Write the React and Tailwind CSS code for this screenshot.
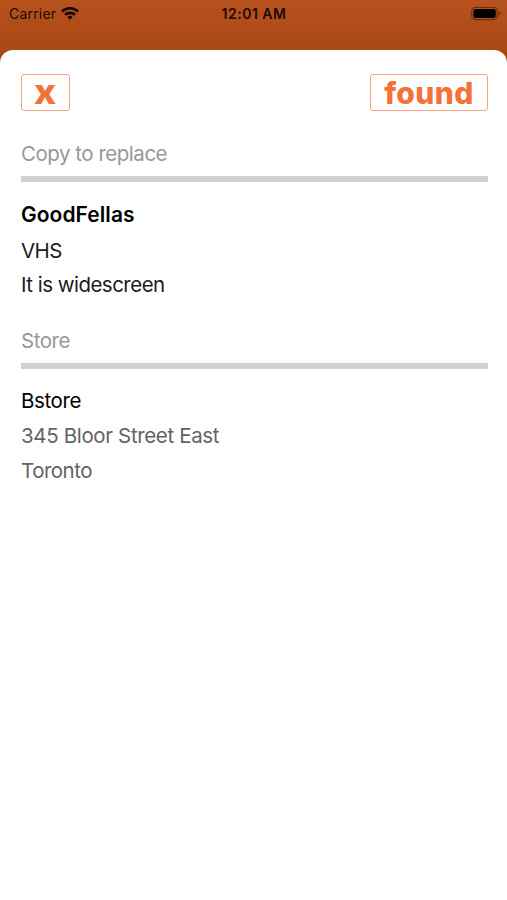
const WifiIcon = () => (
  <svg viewBox="0 0 18 13" className="ml-[5px] h-[13px] w-[18px]" fill="none" stroke="#120602" strokeWidth="2.6">
    <path d="M1 4.6a11.4 11.4 0 0 1 16 0" />
    <path d="M4 7.9a7.1 7.1 0 0 1 10 0" />
    <path d="M9 12.8 6.3 10.1a3.9 3.9 0 0 1 5.4 0z" fill="#120602" stroke="none" />
  </svg>
);

const BatteryIcon = () => (
  <svg viewBox="0 0 30 14" className="h-[14px] w-[30px]">
    <rect x="0.8" y="0.4" width="25.4" height="12.2" rx="3.6" fill="none" stroke="#6d2e10" strokeWidth="1.2" />
    <rect x="2.5" y="2" width="22.2" height="9.1" rx="2" fill="#000" />
    <path d="M27.7 4.4c2 .7 2 3.5 0 4.2z" fill="#6d2e10" />
  </svg>
);

const StatusBar = () => (
  <div className="grid h-[27px] grid-cols-3 items-center pr-[6px] pl-[9px] text-[14px] text-[#1d0b04]">
    <div className="flex items-center">
      <span className="tracking-[0.2px]">Carrier</span>
      <WifiIcon />
    </div>
    <span className="-ml-[2px] text-center font-semibold tracking-[0.5px] whitespace-nowrap">12:01 AM</span>
    <div className="flex justify-end">
      <BatteryIcon />
    </div>
  </div>
);

const OutlineButton = ({ className, children }) => (
  <button
    className={`flex h-[37px] items-center justify-center rounded-[3px] border border-[#f5a583] font-extrabold text-[#f27238] ${className}`}
  >
    {children}
  </button>
);

const Section = ({ title, className, children }) => (
  <section className={className}>
    <h2 className="h-[35px] text-[20.5px] leading-[26px] tracking-[-0.48px] text-[#98989a]">{title}</h2>
    <div className="h-[6px] bg-[#d1d1d5]" />
    <div className="mt-[15px] text-[20.5px] leading-[34.7px] tracking-[-0.52px]">{children}</div>
  </section>
);

export default function App() {
  return (
    <div className="flex h-[900px] w-full flex-col overflow-hidden bg-linear-to-b from-[#b8521f] to-[#a94813] to-[50px] font-['Inter',sans-serif]">
      <StatusBar />
      <main className="mt-[23px] flex-1 rounded-t-[13px] bg-white pt-[24px] pr-[19px] pl-[21px]">
        <div className="flex justify-between">
          <OutlineButton className="w-[49px] text-[34px]">
            <span className="-translate-y-px scale-x-110">x</span>
          </OutlineButton>
          <OutlineButton className="w-[118px] text-[30px] tracking-[0.4px]">
            <span className="translate-y-px">found</span>
          </OutlineButton>
        </div>
        <Section title="Copy to replace" className="mt-[30px]">
          <p className="pt-px text-[21px] font-semibold tracking-[0.05px] text-black">GoodFellas</p>
          <p className="pt-px text-[#1c1c1c]">VHS</p>
          <p className="text-[#1c1c1c]">It is widescreen</p>
        </Section>
        <Section title="Store" className="mt-[25px]">
          <p className="tracking-[-0.4px] text-black">Bstore</p>
          <p className="tracking-[-0.35px] text-[#636363]">345 Bloor Street East</p>
          <p className="tracking-[-0.5px] text-[#636363]">Toronto</p>
        </Section>
      </main>
    </div>
  );
}
